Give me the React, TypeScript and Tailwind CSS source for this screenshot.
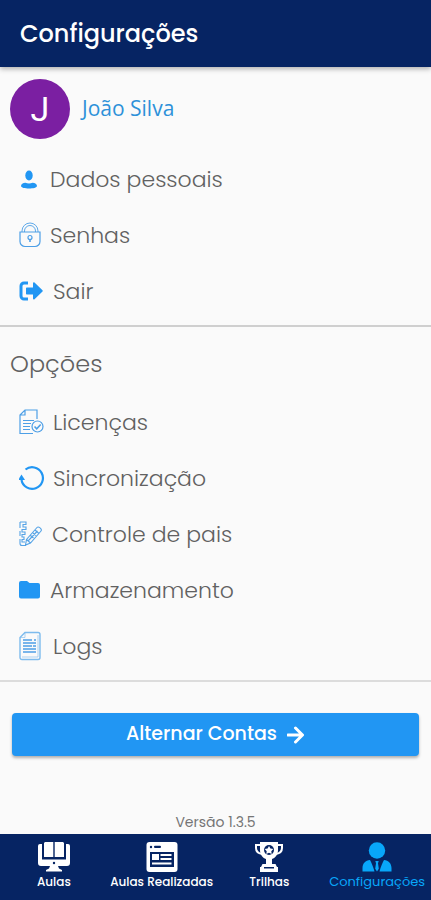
import type { ReactNode } from "react";

function PersonIcon() {
  return (
    <svg width="22" height="24" viewBox="0 0 22 24" fill="#2196f3" aria-hidden="true">
      <ellipse cx="10" cy="8.500" rx="3.700" ry="5" />
      <path d="M2 19c0-2 1.800-3 4.500-3.200 1.800.9 5.200.9 7 0C16.200 16 18 17 18 19c0 1.700-4 2.500-8 2.500S2 20.700 2 19z" />
    </svg>
  );
}

function LockIcon() {
  return (
    <svg width="22" height="26" viewBox="0 0 22 26" fill="none" stroke="#4d9fe6" strokeWidth="1.200" aria-hidden="true">
      <path d="M3 10V9a8 8 0 0 1 16 0v1M5.500 10V9a5.500 5.500 0 0 1 11 0v1" strokeWidth=".9" />
      <path d="M1 10h20v9.500a5 5 0 0 1-5 5H6a5 5 0 0 1-5-5z" />
      <circle cx="11" cy="15.500" r="2" />
      <path d="M11 17.500v2.500" strokeWidth="1.600" />
    </svg>
  );
}

function ExitIcon() {
  return (
    <svg width="25" height="20" viewBox="0 0 25 20" fill="none" aria-hidden="true">
      <path d="M9 2H5a3 3 0 0 0-3 3v10a3 3 0 0 0 3 3h4" stroke="#2196f3" strokeWidth="3" />
      <path d="M8 6.500h6V2.200c0-.9.900-1.200 1.500-.6l8 7.600c.4.400.4 1 0 1.400l-8 7.600c-.6.600-1.500.3-1.500-.6V13.500H8c-.6 0-1-.4-1-1v-5c0-.6.400-1 1-1z" fill="#2196f3" />
    </svg>
  );
}

function LicenseIcon() {
  return (
    <svg width="25" height="26" viewBox="0 0 25 26" fill="none" stroke="#4d9fe6" strokeWidth="1.200" aria-hidden="true">
      <path d="M18 10V1H6L1 6v18.500h13M6 1v5H1" />
      <path d="M4 11.500h11M4 14.500h8M4 17.500h7M4 20.500h7" />
      <circle cx="18.500" cy="17.500" r="5.500" />
      <path d="m15.500 17.500 2.200 2.300 4-4.300" strokeWidth="1.600" />
    </svg>
  );
}

function SyncIcon() {
  return (
    <svg width="27" height="26" viewBox="0 0 27 26" fill="none" aria-hidden="true">
      <path d="M6.500 4.500A10.800 10.800 0 1 1 2.500 15" stroke="#2196f3" strokeWidth="2.200" />
      <path d="M-1 15 2.500 9.500 6 15z" fill="#2196f3" />
    </svg>
  );
}

function RulerPencilIcon() {
  return (
    <svg width="24" height="26" viewBox="0 0 24 26" fill="none" stroke="#55a3e6" strokeWidth="1.100" aria-hidden="true">
      <path d="M1 1h6v2.500H4V6h3v2.500H3V11h3v2.500H3V16h2v2.500H3V21h3M1 1v6M1 10v5M1 18v4.500A2 2 0 0 0 3 24.500h4" />
      <path d="m6.500 24 1-5.500L18 6.500c1.300-1.500 5.500 1.200 4 3.500L11.500 22zM7.500 18.500l4 3.500M16 9l4 3.500M9.500 19.500l9-9.500M14 12l3 2.500M11.500 14.500l3 2.500" />
    </svg>
  );
}

function FolderIcon() {
  return (
    <svg width="22" height="20" viewBox="0 0 22 20" fill="#2196f3" aria-hidden="true">
      <path d="M2 1h6l2.500 2H19a2 2 0 0 1 2 2v11.500a2 2 0 0 1-2 2H2a2 2 0 0 1-2-2V3a2 2 0 0 1 2-2z" />
    </svg>
  );
}

function LogIcon() {
  return (
    <svg width="22" height="30" viewBox="0 0 22 30" fill="none" stroke="#7dbbed" aria-hidden="true">
      <path d="M6 1.500h13a2 2 0 0 1 2 2v23a2 2 0 0 1-2 2H3a2 2 0 0 1-2-2v-20z" strokeWidth="1.400" />
      <path d="M6 1.500v5H1M19 4v22H3" strokeWidth=".6" />
      <path d="M4 9h9m2 0h2M4 12h13M4 15h9m1 0h3M4 18h13M4 21h13" stroke="#4d9fe6" strokeWidth="1.300" />
    </svg>
  );
}

function LessonsIcon() {
  return (
    <svg width="34" height="30" viewBox="0 0 34 30" fill="white" aria-hidden="true">
      <path d="M8 0h8.300v15H7V1zM17.700 0H26l1 1v14h-9.300z" />
      <path d="M3 2h2v15.500h24V2h2a2 2 0 0 1 2 2v17a3 3 0 0 1-3 3h-9l1 2.500 3 1.500v1.500H9V28l3-1.500 1-2.500H4a3 3 0 0 1-3-3V4a2 2 0 0 1 2-2z" />
      <circle cx="17" cy="21" r="1.200" fill="#062463" />
    </svg>
  );
}

function CompletedIcon() {
  return (
    <svg width="32" height="30" viewBox="0 0 32 30" aria-hidden="true">
      <rect x="0.500" y="0" width="31" height="30" rx="3" fill="white" />
      <g fill="#062463">
        <circle cx="5" cy="5" r="1.200" />
        <rect x="8" y="3.800" width="7" height="2.300" rx="1" />
        <path d="M4 10h24v15H4z" />
      </g>
      <path d="M6 12h7v6H6zM14.500 12h11v2h-11zM14.500 16h11v2h-11zM6 20.500h19.500v2H6z" fill="white" />
    </svg>
  );
}

function TrophyIcon() {
  return (
    <svg width="30" height="30" viewBox="0 0 30 30" aria-hidden="true">
      <g fill="none" stroke="white" strokeWidth="2">
        <path d="M6 3H2v3c0 4 3 5.500 6 6M24 3h4v3c0 4-3 5.500-6 6" />
      </g>
      <path d="M6 0h18v8c0 5-3 8-6 9v5h3.500l1.500 3H7l1.500-3H12v-5c-3-1-6-4-6-9zM6 25h18v5H6z" fill="white" />
      <circle cx="15" cy="8" r="5" fill="#062463" />
      <path d="m15 4 1.400 2.600 2.900.5-2 2.100.4 2.900-2.700-1.300-2.700 1.300.4-2.900-2-2.100 2.900-.5z" fill="white" />
      <path d="M10 25h10v1.500H10z" fill="#062463" />
    </svg>
  );
}

function AccountIcon() {
  return (
    <svg width="30" height="30" viewBox="0 0 30 30" fill="#08a7fa" aria-hidden="true">
      <circle cx="15" cy="8.500" r="8.200" />
      <path d="M8 18c1.500 3 3.200 6.500 4.500 11.500H.5V26c0-4.500 3-7.500 7.500-8zM22 18c-1.500 3-3.200 6.500-4.500 11.500h12V26c0-4.500-3-7.500-7.500-8zM13.300 19h3.400l-.7 2.300.8 5.500-1.800 2.700-1.800-2.700.8-5.500z" />
    </svg>
  );
}

type RowProps = { icon: ReactNode; label: string; gap: string };

function Row({ icon, label, gap }: RowProps) {
  return (
    <li>
      <button type="button" className={`flex h-14 w-full items-center pl-[19px] text-left ${gap}`}>
        {icon}
        <span>{label}</span>
      </button>
    </li>
  );
}

type TabProps = { icon: ReactNode; label: string; active?: boolean };

function Tab({ icon, label, active }: TabProps) {
  return (
    <a
      href="#"
      aria-current={active ? "page" : undefined}
      className={`flex flex-1 flex-col items-center gap-0.5 pt-2 whitespace-nowrap ${
        active ? "text-[13px] text-[#08a7fa]" : "text-xs font-medium text-white"
      }`}
    >
      {icon}
      <span className="leading-4">{label}</span>
    </a>
  );
}

export default function App() {
  return (
    <div className="flex min-h-screen flex-col bg-[#fafafa] font-[Poppins,Inter,sans-serif] text-[#616161]">
      <header className="flex h-[67px] items-center bg-[#062463] px-5 shadow-[0_2px_5px_rgba(0,0,0,0.3)]">
        <h1 className="text-2xl font-medium text-white">Configurações</h1>
      </header>

      <main className="flex flex-1 flex-col">
        <div className="flex items-center gap-3 px-2.5 pt-3 pb-3">
          <div className="flex size-[60px] items-center justify-center rounded-full bg-[#7b1fa2] font-[Roboto,sans-serif] text-[34px] text-white">
            J
          </div>
          <p className="font-[Open_Sans,sans-serif] text-[21px] text-[#2d91d9]">João Silva</p>
        </div>
        <ul className="border-b-2 border-[#cfcfcf] pb-1.5 text-[22px] font-light">
          <Row icon={<PersonIcon />} label="Dados pessoais" gap="gap-[9px]" />
          <Row icon={<LockIcon />} label="Senhas" gap="gap-[9px]" />
          <Row icon={<ExitIcon />} label="Sair" gap="gap-[9px]" />
        </ul>

        <section className="border-b-2 border-[#dcdcdc] pb-1.5">
          <h2 className="px-2.5 pt-[17px] pb-2.5 text-2xl leading-10 font-light">Opções</h2>
          <ul className="text-[22px] font-light">
            <Row icon={<LicenseIcon />} label="Licenças" gap="gap-[9px]" />
            <Row icon={<SyncIcon />} label="Sincronização" gap="gap-[7px]" />
            <Row icon={<RulerPencilIcon />} label="Controle de pais" gap="gap-[9px]" />
            <Row icon={<FolderIcon />} label="Armazenamento" gap="gap-[9px]" />
            <Row icon={<LogIcon />} label="Logs" gap="gap-3" />
          </ul>
        </section>

        <div className="px-3 pt-[31px]">
          <button
            type="button"
            className="flex h-[43px] w-full items-center justify-center gap-2.5 rounded bg-[#2196f3] text-[19px] font-medium text-white shadow-[0_2px_3px_rgba(0,0,0,0.3)]"
          >
            Alternar Contas
            <svg width="18" height="18" viewBox="0 0 18 18" fill="none" stroke="white" strokeWidth="3" aria-hidden="true">
              <path d="M1 9h14M8.500 2l7 7-7 7" strokeLinecap="round" strokeLinejoin="round" />
            </svg>
          </button>
        </div>
        <p className="mt-auto pt-8 pb-1 text-center text-sm leading-4 text-[#757575]">Versão 1.3.5</p>
      </main>

      <nav className="flex h-[66px] bg-[#062463]">
        <Tab icon={<LessonsIcon />} label="Aulas" />
        <Tab icon={<CompletedIcon />} label="Aulas Realizadas" />
        <Tab icon={<TrophyIcon />} label="Trilhas" />
        <Tab icon={<AccountIcon />} label="Configurações" active />
      </nav>
    </div>
  );
}
